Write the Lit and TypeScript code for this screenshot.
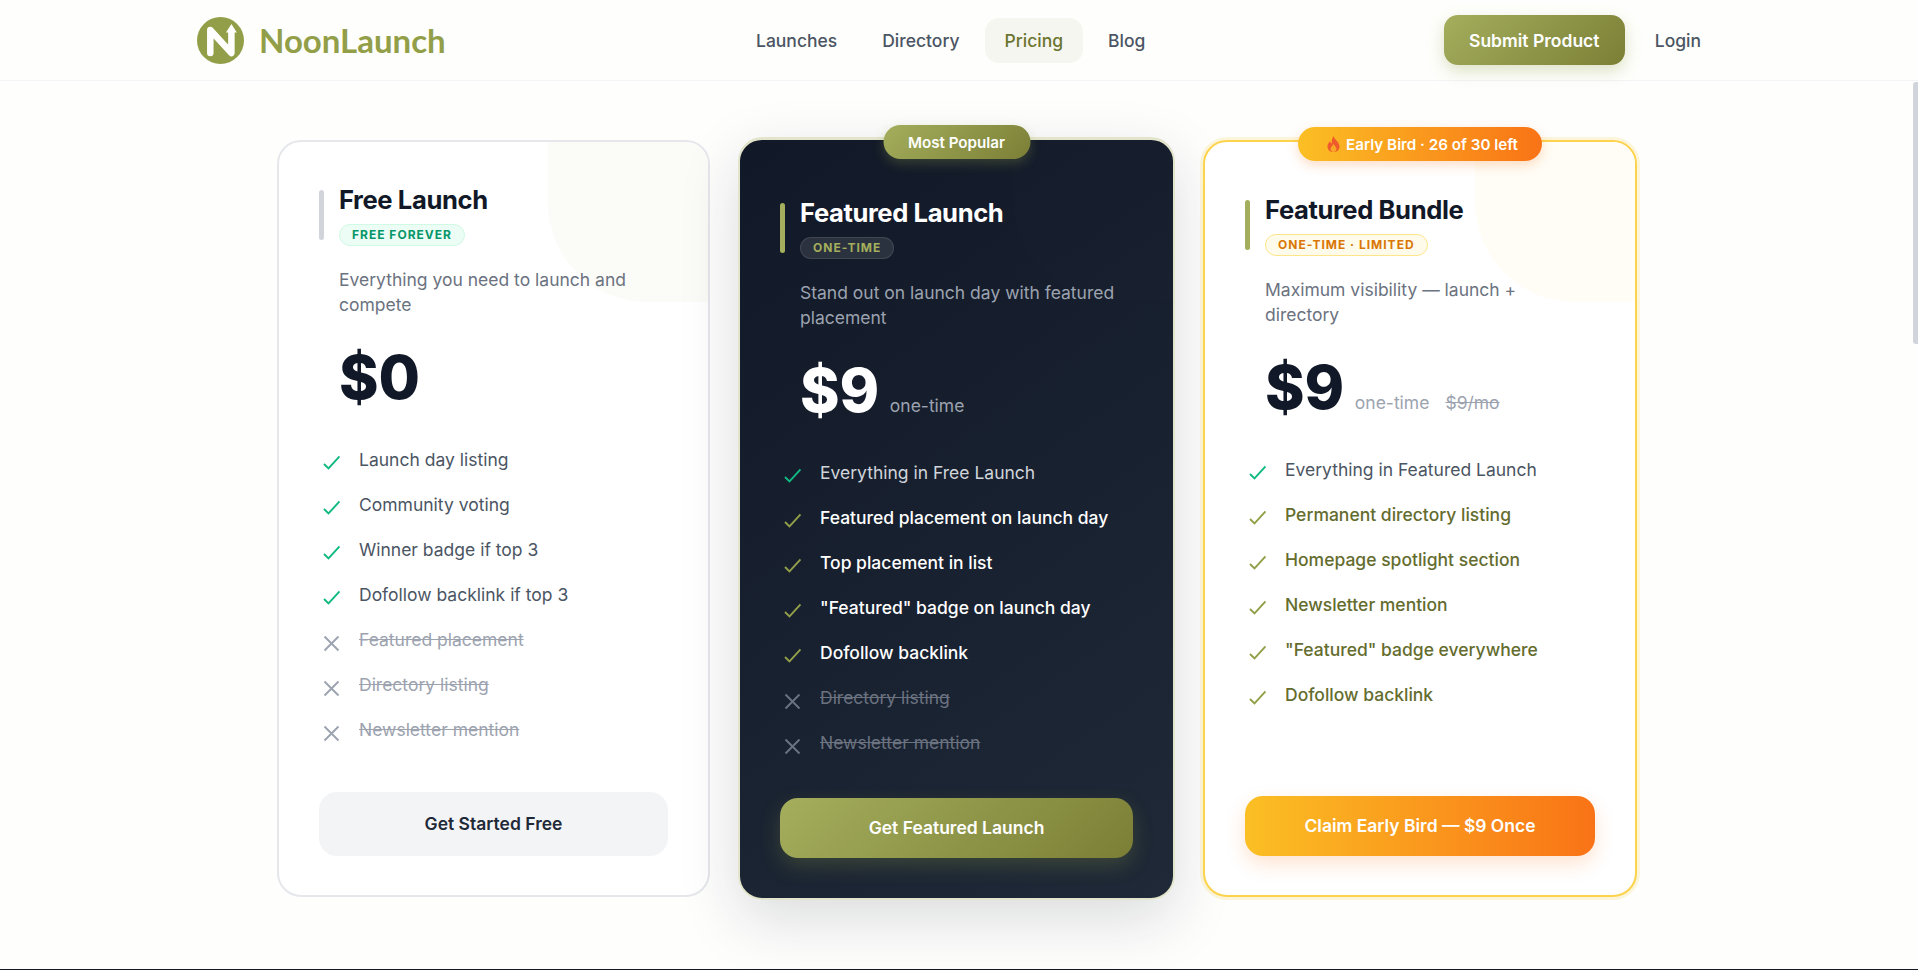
import {LitElement, css, html, svg} from 'lit';
import {customElement} from 'lit/decorators.js';

type Feature = {text: string; kind: 'check' | 'accent' | 'off'};

const FREE: Feature[] = [
  {text: 'Launch day listing', kind: 'check'},
  {text: 'Community voting', kind: 'check'},
  {text: 'Winner badge if top 3', kind: 'check'},
  {text: 'Dofollow backlink if top 3', kind: 'check'},
  {text: 'Featured placement', kind: 'off'},
  {text: 'Directory listing', kind: 'off'},
  {text: 'Newsletter mention', kind: 'off'},
];

const FEATURED: Feature[] = [
  {text: 'Everything in Free Launch', kind: 'check'},
  {text: 'Featured placement on launch day', kind: 'accent'},
  {text: 'Top placement in list', kind: 'accent'},
  {text: '"Featured" badge on launch day', kind: 'accent'},
  {text: 'Dofollow backlink', kind: 'accent'},
  {text: 'Directory listing', kind: 'off'},
  {text: 'Newsletter mention', kind: 'off'},
];

const BUNDLE: Feature[] = [
  {text: 'Everything in Featured Launch', kind: 'check'},
  {text: 'Permanent directory listing', kind: 'accent'},
  {text: 'Homepage spotlight section', kind: 'accent'},
  {text: 'Newsletter mention', kind: 'accent'},
  {text: '"Featured" badge everywhere', kind: 'accent'},
  {text: 'Dofollow backlink', kind: 'accent'},
];

const CHECK = svg`<path d="M1 9 L5.5 13.5 L16.5 1.5" />`;
const CROSS = svg`<path d="M1.5 1.5 L15.5 15.5 M15.5 1.5 L1.5 15.5" />`;

@customElement('app-root')
export class AppRoot extends LitElement {
  static styles = css`
    :host {
      display: block;
      position: relative;
      height: 970px;
      overflow: hidden;
      font-family: Inter, 'Noto Sans', sans-serif;
      background: #fefefd;
      color: #111827;
    }
    .header {
      display: flex;
      align-items: center;
      height: 81px;
      box-sizing: border-box;
      padding: 0 197px;
      border-bottom: 1px solid #f3f4f6;
      background: #fefefc;
    }
    .logo {
      display: flex;
      align-items: center;
      gap: 15px;
      width: 248px;
    }
    .logo svg {
      flex: none;
    }
    .logo-text {
      font-family: Lato, sans-serif;
      font-size: 33px;
      font-weight: 700;
      color: #939f48;
      white-space: nowrap;
    }
    .nav {
      display: flex;
      align-items: center;
      gap: 5px;
      margin-left: 291px;
    }
    .nav a {
      padding: 0 20px;
      height: 45px;
      line-height: 46px;
      font-size: 17.5px;
      font-weight: 500;
      color: #4b5563;
      border-radius: 14px;
    }
    .nav a.active {
      background: #f5f6ef;
      color: #6b7530;
    }
    .actions {
      display: flex;
      align-items: center;
      margin-left: auto;
    }
    .submit {
      width: 181px;
      height: 50px;
      line-height: 51px;
      text-align: center;
      border-radius: 14px;
      font-size: 17.5px;
      font-weight: 600;
      color: #fff;
      background: linear-gradient(135deg, #a4ae5c, #7b7f36);
      box-shadow: 0 6px 16px rgba(147, 159, 72, 0.3);
    }
    .login {
      padding: 1px 20px 0 30px;
      font-size: 17.5px;
      font-weight: 500;
      color: #4b5563;
    }
    .plans {
      display: grid;
      grid-template-columns: 433px 437px 434px;
      column-gap: 28px;
      justify-content: center;
      padding: 59px 4px 0 0;
      height: 888px;
      box-sizing: border-box;
    }
    .card {
      position: relative;
      display: flex;
      flex-direction: column;
      box-sizing: border-box;
      height: 757px;
      padding: 42px 40px 39px;
      border: 2px solid #e5e7eb;
      border-radius: 24px;
      background: #fff;
    }
    .corner {
      position: absolute;
      top: 0;
      right: 0;
      width: 160px;
      height: 160px;
      background: #fbfbf8;
      border-radius: 0 22px 0 100px;
    }
    .card.featured {
      margin-top: -3px;
      height: 763px;
      padding-top: 57px;
      padding-bottom: 40px;
      border-color: #e2e5cc;
      border-top-width: 3px;
      background: linear-gradient(145deg, #111827, #1f2937);
      box-shadow: 0 20px 60px rgba(17, 24, 39, 0.15);
    }
    .featured .corner {
      background: rgba(255, 255, 255, 0.008);
    }
    .card.bundle {
      padding-top: 52px;
      border-color: #fcd34d;
      box-shadow: 0 0 0 3px rgba(252, 211, 77, 0.2);
    }
    .bundle .corner {
      background: #fffdf6;
    }
    .ribbon {
      position: absolute;
      left: 50%;
      transform: translateX(-50%);
      display: flex;
      align-items: center;
      justify-content: center;
      gap: 6px;
      height: 34px;
      border-radius: 17px;
      font-size: 15.2px;
      font-weight: 600;
      color: #fff;
      white-space: nowrap;
    }
    .ribbon.popular {
      top: -15px;
      width: 147px;
      background: linear-gradient(135deg, #a4ae5c, #7b7f36);
      box-shadow: 0 4px 12px rgba(147, 159, 72, 0.3);
    }
    .ribbon.early {
      top: -15px;
      width: 244px;
      box-sizing: border-box;
      padding-left: 5px;
      background: linear-gradient(90deg, #fbbf24, #f97316);
      box-shadow: 0 4px 12px rgba(249, 115, 22, 0.25);
    }
    .head {
      position: relative;
      display: flex;
      align-items: center;
      gap: 15px;
    }
    .bar {
      flex: none;
      width: 5px;
      height: 50px;
      border-radius: 3px;
      background: #d1d5db;
    }
    .featured .bar,
    .bundle .bar {
      background: #a4ae5c;
    }
    .title {
      font-size: 25.6px;
      font-weight: 700;
      line-height: 31px;
      letter-spacing: -0.4px;
    }
    .featured .title {
      color: #fff;
    }
    .badge {
      display: inline-block;
      box-sizing: border-box;
      height: 22px;
      line-height: 20px;
      margin-top: 9px;
      padding: 0 12px;
      border: 1px solid #d1fae5;
      border-radius: 11px;
      background: #ecfdf5;
      color: #059669;
      font-size: 12px;
      font-weight: 700;
      letter-spacing: 1px;
      white-space: nowrap;
    }
    .featured .badge {
      background: rgba(255, 255, 255, 0.1);
      border-color: rgba(255, 255, 255, 0.1);
      color: #a4ae5c;
    }
    .bundle .badge {
      background: #fffbeb;
      border-color: #fde68a;
      color: #d97706;
    }
    .desc {
      position: relative;
      margin: 21px 0 0 20px;
      font-size: 17.5px;
      line-height: 25px;
      color: #6b7280;
      max-width: 300px;
    }
    .featured .desc {
      color: #9ca3af;
      max-width: 330px;
    }
    .price {
      display: flex;
      align-items: baseline;
      margin: 28px 0 0 20px;
      color: #111827;
    }
    .amount {
      font-size: 60px;
      font-weight: 800;
      line-height: 64px;
    }
    .featured .amount {
      color: #fff;
    }
    .unit {
      margin-left: 10.5px;
      font-size: 17.5px;
      color: #9ca3af;
    }
    .was {
      margin-left: 16px;
      font-size: 17.5px;
      color: #9ca3af;
      text-decoration: line-through;
    }
    .features {
      list-style: none;
      margin: 38px 0 0;
      padding: 0;
      display: flex;
      flex-direction: column;
      gap: 20px;
    }
    .features li {
      display: flex;
      align-items: center;
      gap: 19px;
      height: 25px;
      font-size: 17.5px;
      color: #4b5563;
    }
    .features svg {
      flex: none;
      margin: 8px 0 0 4px;
      fill: none;
      stroke-width: 1.9;
      width: 17px;
      height: 17px;
    }
    .check svg {
      stroke: #10b981;
    }
    .accent svg {
      stroke: #939f48;
    }
    .off svg {
      stroke: #9ca3af;
    }
    .features .off {
      color: #9ca3af;
      text-decoration: line-through;
    }
    .featured .check {
      color: #d1d5db;
    }
    .featured .accent {
      color: #fff;
      font-weight: 500;
    }
    .featured .off {
      color: #6b7280;
    }
    .featured .off svg {
      stroke: #6b7280;
    }
    .bundle .accent {
      color: #646c2e;
      font-weight: 500;
    }
    .cta {
      margin-top: auto;
      height: 64px;
      line-height: 64px;
      text-align: center;
      border-radius: 18px;
      font-size: 17.5px;
      font-weight: 600;
      color: #1f2937;
      background: #f3f4f6;
    }
    .featured .cta {
      height: 60px;
      line-height: 60px;
      color: #fff;
      background: linear-gradient(135deg, #a4ae5c, #7b7f36);
      box-shadow: 0 8px 20px rgba(147, 159, 72, 0.25);
    }
    .bundle .cta {
      height: 60px;
      line-height: 60px;
      color: #fff;
      background: linear-gradient(90deg, #fbbf24, #f97316);
      box-shadow: 0 8px 20px rgba(249, 115, 22, 0.2);
    }
    .footer {
      height: 61px;
      background: #111827;
    }
    .thumb {
      position: absolute;
      top: 82px;
      right: 0;
      width: 5px;
      height: 262px;
      border-radius: 3px 0 0 3px;
      background: #d1d5db;
    }
  `;

  renderFeatures(items: Feature[]) {
    return html`<ul class="features">
      ${items.map(
        (f) => html`<li class=${f.kind}>
          <svg viewBox="0 0 17 17">${f.kind === 'off' ? CROSS : CHECK}</svg>
          <span>${f.text}</span>
        </li>`
      )}
    </ul>`;
  }

  render() {
    return html`
      <header class="header">
        <div class="logo">
          <svg width="47" height="47" viewBox="0 0 47 47">
            <circle cx="23.5" cy="23.5" r="23.5" fill="#939f48" />
            <path
              d="M13.3 36 V13 L34.4 36 V14"
              fill="none"
              stroke="#fff"
              stroke-width="6.5"
              stroke-linejoin="round"
              stroke-linecap="round"
            />
            <path d="M34.4 7 L39.8 15.5 H29 Z" fill="#fff" />
          </svg>
          <span class="logo-text">NoonLaunch</span>
        </div>
        <nav class="nav">
          <a>Launches</a>
          <a>Directory</a>
          <a class="active">Pricing</a>
          <a>Blog</a>
        </nav>
        <div class="actions">
          <div class="submit">Submit Product</div>
          <div class="login">Login</div>
        </div>
      </header>
      <main class="plans">
        <section class="card">
          <div class="corner"></div>
          <div class="head">
            <div class="bar"></div>
            <div>
              <div class="title">Free Launch</div>
              <div class="badge">FREE FOREVER</div>
            </div>
          </div>
          <p class="desc">Everything you need to launch and compete</p>
          <div class="price"><span class="amount">$0</span></div>
          ${this.renderFeatures(FREE)}
          <div class="cta">Get Started Free</div>
        </section>
        <section class="card featured">
          <div class="corner"></div>
          <div class="ribbon popular">Most Popular</div>
          <div class="head">
            <div class="bar"></div>
            <div>
              <div class="title">Featured Launch</div>
              <div class="badge">ONE-TIME</div>
            </div>
          </div>
          <p class="desc">Stand out on launch day with featured placement</p>
          <div class="price">
            <span class="amount">$9</span>
            <span class="unit">one-time</span>
          </div>
          ${this.renderFeatures(FEATURED)}
          <div class="cta">Get Featured Launch</div>
        </section>
        <section class="card bundle">
          <div class="corner"></div>
          <div class="ribbon early">
            <svg width="13" height="16" viewBox="0 0 13 16">
              <path
                d="M6.5 0 C7 3 12.5 6 12.5 10.5 C12.5 14 10 16 6.5 16 C3 16 .5 14 .5 10.5 C.5 8 2 6.5 3 5 C3.3 6.5 4 7.2 4.8 7.5 C4.6 5 5 2.5 6.5 0 Z"
                fill="#ef5a2c"
              />
              <path
                d="M6.5 8 C7.5 10 9.5 11 9.5 13 C9.5 15 8 16 6.5 16 C5 16 3.5 15 3.5 13 C3.5 11 5.5 10 6.5 8 Z"
                fill="#f9a825"
              />
            </svg>
            <span>Early Bird · 26 of 30 left</span>
          </div>
          <div class="head">
            <div class="bar"></div>
            <div>
              <div class="title">Featured Bundle</div>
              <div class="badge">ONE-TIME · LIMITED</div>
            </div>
          </div>
          <p class="desc">Maximum visibility — launch + directory</p>
          <div class="price">
            <span class="amount">$9</span>
            <span class="unit">one-time</span>
            <span class="was">$9/mo</span>
          </div>
          ${this.renderFeatures(BUNDLE)}
          <div class="cta">Claim Early Bird — $9 Once</div>
        </section>
      </main>
      <footer class="footer"></footer>
      <div class="thumb"></div>
    `;
  }
}
